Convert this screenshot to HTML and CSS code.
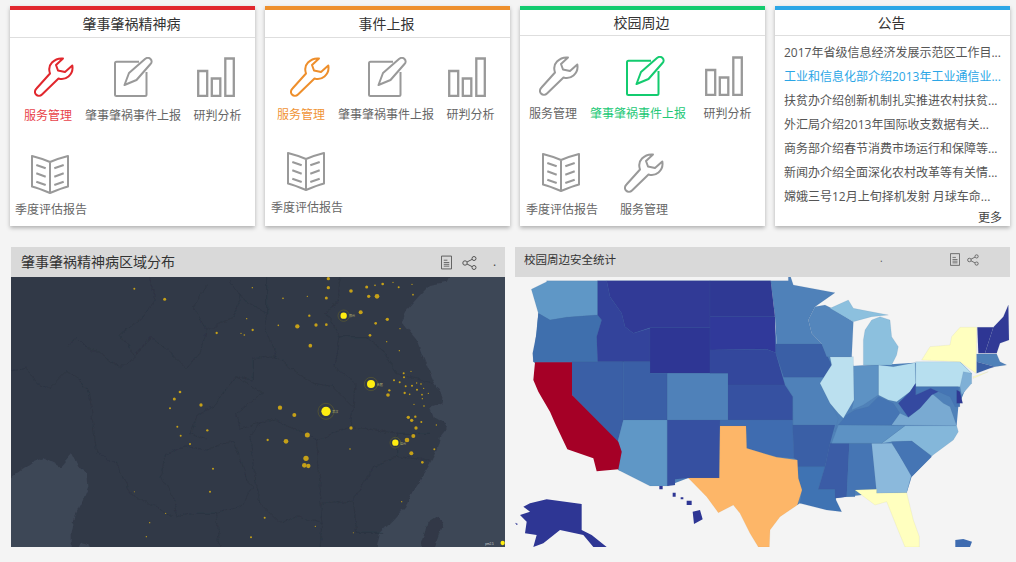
FILE: index.html
```html
<!DOCTYPE html>
<html lang="zh">
<head>
<meta charset="utf-8">
<title>Dashboard</title>
<link rel="stylesheet" href="styles.css">
</head>
<body>
<svg class="defs" width="0" height="0" aria-hidden="true">
  <defs>
    <filter id="rough" x="-5%" y="-5%" width="110%" height="110%">
      <feTurbulence type="fractalNoise" baseFrequency=".035" numOctaves="3" seed="4"/>
      <feDisplacementMap in="SourceGraphic" scale="16" xChannelSelector="R" yChannelSelector="G"/>
    </filter>
    <symbol id="i-wrench" viewBox="0 0 40 40">
      <path d="M16 16.500C14.500 12 15.500 8 18 5.500 21 2.500 25 1 29 1.500L22 8 24 13.500 31 15 38.300 8.500C39 12.500 37.500 17 34.500 19.500 31.500 22 27.500 22.500 24.500 21.500L8 37.500C6 39.500 3.500 39 2 37.500 .5 36 .5 33.500 2.500 31.500Z" fill="none" stroke="currentColor" stroke-width="2" stroke-linejoin="round"/>
    </symbol>
    <symbol id="i-edit" viewBox="0 0 40 40">
      <path d="M25 4.700H2.500A1.500 1.500 0 0 0 1 6.200V37.500A1.500 1.500 0 0 0 2.500 39H31A1.500 1.500 0 0 0 32.500 37.500V15" fill="none" stroke="currentColor" stroke-width="2"/>
      <path d="M10.500 28L15 16 31 2C33 .5 35 .5 36.500 2 38 3.500 38 5.500 36.500 7L22.500 23Z" fill="none" stroke="currentColor" stroke-width="2" stroke-linejoin="round"/>
    </symbol>
    <symbol id="i-bars" viewBox="0 0 40 40">
      <path d="M1.200 14h9v25h-9zM14.800 21.500h8.500V39h-8.500zM28.300 1.500h8.500V39h-8.500z" fill="none" stroke="currentColor" stroke-width="2.300"/>
    </symbol>
    <symbol id="i-book" viewBox="0 0 40 40">
      <path d="M19 7C13 4.500 7 2.500 1 1V31.500C7 33 13 35.500 19 38 25 35.500 31 33 37 31.500V1C31 2.500 25 4.500 19 7zM19 7V38" fill="none" stroke="currentColor" stroke-width="2" stroke-linejoin="round"/>
      <path d="M5.300 10l9.400 3.300M5.300 18.300l9.400 3.400M5.300 26.700l9.400 3.300M32.700 10l-9.400 3.300M32.700 18.300l-9.400 3.400M32.700 26.700l-9.400 3.300" fill="none" stroke="currentColor" stroke-width="2"/>
    </symbol>
    <symbol id="i-doc" viewBox="0 0 12 15">
      <path d="M.5.500h11v14H.5z" fill="none" stroke="currentColor"/>
      <path d="M3 5h4M3 7.500h6M3 9.500h6M3 11.500h6" fill="none" stroke="currentColor" stroke-width=".9"/>
    </symbol>
    <symbol id="i-share" viewBox="0 0 15 14">
      <circle cx="3" cy="7" r="2.200" fill="none" stroke="currentColor"/>
      <circle cx="12" cy="2.500" r="2" fill="none" stroke="currentColor"/>
      <circle cx="12" cy="11.500" r="2" fill="none" stroke="currentColor"/>
      <path d="M5 6l5-2.600M5 8l5 2.600" stroke="currentColor" fill="none"/>
    </symbol>
  </defs>
</svg>

<main class="page">
  <section class="cards">
    <article class="card card-red">
      <h2 class="card-title tall">肇事肇祸精神病</h2>
      <div class="tiles">
        <a class="tile t1 on"><svg class="ico wrench"><use href="#i-wrench"/></svg><span>服务管理</span></a>
        <a class="tile t2"><svg class="ico edit"><use href="#i-edit"/></svg><span>肇事肇祸事件上报</span></a>
        <a class="tile t3"><svg class="ico bars"><use href="#i-bars"/></svg><span>研判分析</span></a>
        <a class="tile t4"><svg class="ico book"><use href="#i-book"/></svg><span>季度评估报告</span></a>
      </div>
    </article>
    <article class="card card-orange">
      <h2 class="card-title tall">事件上报</h2>
      <div class="tiles">
        <a class="tile t1 on"><svg class="ico wrench"><use href="#i-wrench"/></svg><span>服务管理</span></a>
        <a class="tile t2"><svg class="ico edit"><use href="#i-edit"/></svg><span>肇事肇祸事件上报</span></a>
        <a class="tile t3"><svg class="ico bars"><use href="#i-bars"/></svg><span>研判分析</span></a>
        <a class="tile t4"><svg class="ico book"><use href="#i-book"/></svg><span>季度评估报告</span></a>
      </div>
    </article>
    <article class="card card-green">
      <h2 class="card-title">校园周边</h2>
      <div class="tiles">
        <a class="tile t1"><svg class="ico wrench"><use href="#i-wrench"/></svg><span>服务管理</span></a>
        <a class="tile t2 on"><svg class="ico edit"><use href="#i-edit"/></svg><span>肇事肇祸事件上报</span></a>
        <a class="tile t3"><svg class="ico bars"><use href="#i-bars"/></svg><span>研判分析</span></a>
        <a class="tile t4"><svg class="ico book"><use href="#i-book"/></svg><span>季度评估报告</span></a>
        <a class="tile t5"><svg class="ico wrench"><use href="#i-wrench"/></svg><span>服务管理</span></a>
      </div>
    </article>
    <article class="card card-blue notice">
      <h2 class="card-title">公告</h2>
      <ul class="news">
        <li>2017年省级信息经济发展示范区工作目...</li>
        <li class="on">工业和信息化部介绍2013年工业通信业...</li>
        <li>扶贫办介绍创新机制扎实推进农村扶贫...</li>
        <li>外汇局介绍2013年国际收支数据有关...</li>
        <li>商务部介绍春节消费市场运行和保障等...</li>
        <li>新闻办介绍全面深化农村改革等有关情...</li>
        <li>嫦娥三号12月上旬择机发射 月球车命...</li>
      </ul>
      <div class="more">更多</div>
    </article>
  </section>

  <section class="panels">
    <article class="panel panel-left">
      <header class="panel-head">
        <h2>肇事肇祸精神病区域分布</h2>
        <div class="tools"><svg class="doc"><use href="#i-doc"/></svg><svg class="share"><use href="#i-share"/></svg><span class="dot">.</span></div>
      </header>
      <svg class="map" viewBox="33 111 1482 810" preserveAspectRatio="none">
        <rect x="33" y="111" width="1482" height="810" fill="#313947"/>
        <g fill="#3d4656" filter="url(#rough)">
          <path d="M1358 90 1340 125 1290 135 1255 170 1225 205 1205 245 1225 270 1250 300 1265 340 1280 375 1300 420 1328 465 1325 490 1290 505 1300 530 1335 550 1340 565 1320 590 1310 630 1285 680 1240 750 1215 800 1180 840 1140 880 1125 945H1560V90Z"/>
          <path d="M10 735 50 700 100 665 130 655 180 680 215 640 235 680 262 695 265 740 245 790 225 830 215 880 215 945H10Z"/>
          <path d="M220 945 240 908 265 915 275 945Z"/>
        </g>
        <path fill="#313947" filter="url(#rough)" d="M1255 945 1285 850 1315 830 1330 845 1310 900 1300 945Z"/>
        <g fill="none" stroke="#2a313e" stroke-width="1.600" stroke-linejoin="round" filter="url(#rough)">
          <path d="M20 395 80 385 110 430 150 445 200 395 240 420 270 465 280 560 290 640 350 670 390 760 450 790 520 830"/>
          <path d="M205 320 230 290 260 320 310 345 360 385 405 350 360 285 430 230 465 180 445 100"/>
          <path d="M405 350 450 290 520 345 560 385 600 340 620 270 580 200 620 130"/>
          <path d="M620 270 700 230 720 170 690 120M720 170 800 220 800 100"/>
          <path d="M800 220 795 265 830 350 760 355 760 420 710 410 790 460 710 520 720 565 780 545 830 540 905 575 950 600 1050 560 1060 500 1000 440 940 430 880 390 830 350"/>
          <path d="M1020 100 1015 180 980 220 1020 290 1005 380 1065 430 1060 500M1020 290 1100 290 1150 330 1190 400 1300 430"/>
          <path d="M1060 560 1190 580 1290 580M1190 580 1190 650 1120 680 1060 780 1070 880 1150 880M1190 650 1290 660"/>
          <path d="M950 600 960 730 965 850 890 830 840 850 780 790 760 680 750 590 780 545"/>
          <path d="M620 600 570 580 590 530 640 500 710 410M620 630 700 600 720 650 740 720 760 740 720 800 650 820 590 820 530 830 520 770 480 710 500 640 560 620 620 630"/>
          <path d="M965 850 960 930M650 820 660 930M1060 780 965 790"/>
        </g>
        <g fill="#c5a018">
          <circle cx="403" cy="146" r="3"/><circle cx="494" cy="178" r="4.500"/><circle cx="757" cy="143" r="2"/><circle cx="849" cy="175" r="2.500"/><circle cx="922" cy="169" r="2"/><circle cx="985" cy="116" r="5"/><circle cx="985" cy="143" r="5"/><circle cx="979" cy="174" r="4.500"/><circle cx="1053" cy="153" r="5.500"/><circle cx="1100" cy="141" r="4.500"/><circle cx="1125" cy="136" r="2.500"/><circle cx="1148" cy="132" r="4"/><circle cx="1179" cy="127" r="2"/><circle cx="1196" cy="142" r="3"/><circle cx="1236" cy="133" r="2"/><circle cx="1239" cy="164" r="2.500"/><circle cx="1106" cy="169" r="5"/><circle cx="1131" cy="169" r="7"/>
          <circle cx="1082" cy="217" r="6"/><circle cx="1162" cy="238" r="5"/><circle cx="1127" cy="250" r="4"/><circle cx="1200" cy="266" r="2"/><circle cx="1110" cy="286" r="4"/><circle cx="1160" cy="305" r="2"/><circle cx="1198" cy="332" r="2"/><circle cx="928" cy="227" r="3.500"/><circle cx="740" cy="236" r="2"/><circle cx="835" cy="256" r="2.500"/><circle cx="892" cy="259" r="6.500"/><circle cx="948" cy="255" r="5"/><circle cx="979" cy="254" r="4"/><circle cx="650" cy="279" r="3.500"/><circle cx="723" cy="280" r="2"/><circle cx="733" cy="285" r="2.500"/><circle cx="758" cy="270" r="3.500"/><circle cx="931" cy="317" r="5.500"/>
          <circle cx="1211" cy="400" r="3"/><circle cx="1212" cy="412" r="3"/><circle cx="1233" cy="394" r="2"/><circle cx="1182" cy="421" r="3"/><circle cx="1199" cy="427" r="3"/><circle cx="1217" cy="439" r="3"/><circle cx="1236" cy="437" r="3"/><circle cx="1250" cy="429" r="2"/><circle cx="1263" cy="432" r="2.500"/><circle cx="1251" cy="449" r="3"/><circle cx="1271" cy="445" r="2"/><circle cx="1168" cy="451" r="3.500"/><circle cx="1164" cy="465" r="5.500"/><circle cx="1214" cy="459" r="3.500"/><circle cx="1229" cy="463" r="2.500"/><circle cx="1266" cy="464" r="2.500"/><circle cx="1285" cy="460" r="2"/><circle cx="1267" cy="476" r="2"/><circle cx="1242" cy="493" r="2"/><circle cx="1272" cy="498" r="2.500"/>
          <circle cx="540" cy="456" r="4"/><circle cx="523" cy="477" r="4.500"/><circle cx="603" cy="495" r="5"/><circle cx="510" cy="505" r="3"/><circle cx="840" cy="503" r="6.500"/><circle cx="883" cy="525" r="6"/><circle cx="532" cy="560" r="3"/><circle cx="622" cy="571" r="3.500"/><circle cx="542" cy="587" r="3"/><circle cx="570" cy="612" r="3"/><circle cx="803" cy="600" r="3.500"/><circle cx="858" cy="604" r="7"/><circle cx="922" cy="585" r="7.500"/><circle cx="1053" cy="564" r="5"/><circle cx="1050" cy="627" r="2.500"/><circle cx="1225" cy="532" r="5"/><circle cx="1246" cy="530" r="3.500"/><circle cx="1235" cy="541" r="5"/><circle cx="1264" cy="546" r="3"/><circle cx="1248" cy="564" r="5"/><circle cx="1309" cy="555" r="2"/><circle cx="1240" cy="588" r="6"/><circle cx="1221" cy="600" r="7"/><circle cx="1234" cy="640" r="6"/><circle cx="1303" cy="628" r="3"/><circle cx="1267" cy="667" r="4"/>
          <circle cx="918" cy="655" r="8"/><circle cx="913" cy="676" r="7"/><circle cx="925" cy="678" r="6.500"/><circle cx="639" cy="686" r="3"/><circle cx="630" cy="755" r="3"/><circle cx="403" cy="755" r="1.500"/><circle cx="794" cy="833" r="3"/><circle cx="946" cy="859" r="2"/><circle cx="449" cy="848" r="2"/><circle cx="497" cy="820" r="2"/><circle cx="439" cy="890" r="2"/><circle cx="753" cy="892" r="3"/><circle cx="1060" cy="878" r="1.500"/><circle cx="1205" cy="785" r="2"/>
        </g>
        <g fill="none" stroke="#5d5c2f" stroke-width="2">
          <circle cx="1031" cy="227" r="17"/><circle cx="1113" cy="432" r="20"/><circle cx="978" cy="514" r="24"/><circle cx="1186" cy="608" r="16"/>
        </g>
        <g fill="#ffee11">
          <circle cx="1031" cy="227" r="9.500"/><circle cx="1113" cy="432" r="12"/><circle cx="978" cy="514" r="14"/><circle cx="1186" cy="608" r="9.500"/>
          <circle cx="1508" cy="909" r="6.500"/>
        </g>
        <g class="maplabels" fill="#b9b36f">
          <text x="1047" y="232">郑州</text><text x="1130" y="438">合肥</text><text x="997" y="520">武汉</text><text x="1200" y="614">温州</text>
        </g>
        <text class="pm" x="1456" y="914" fill="#cfd3d8">pm2.5</text>
      </svg>
    </article>

    <article class="panel panel-right">
      <header class="panel-head small">
        <h2>校园周边安全统计</h2>
        <span class="tick">.</span>
        <div class="tools"><svg class="doc"><use href="#i-doc"/></svg><svg class="share"><use href="#i-share"/></svg></div>
      </header>
      <svg class="map" viewBox="15 111 1485 810" preserveAspectRatio="none">
        <path fill="#4f81b9" d="M263 122H782L800 312 935 312 1025 350 1030 378 1105 375 1215 368 1350 365 1385 400 1345 500 1340 555 1265 648 1205 710 1190 758 1100 760 1010 770 975 775 870 790 862 795 650 780 535 714 472 738 325 690 186 465 70 365 85 220Z"/>
        <g stroke="#44648f" stroke-width="1" stroke-opacity=".3">
          <path fill="#5f97c6" d="M64 148 110 125V122H263V225L220 228 170 232 120 240 85 220 75 185Z"/>
          <path fill="#3f6fad" d="M85 220 120 240 170 232 220 228 263 225 275 240 260 290 263 365H70L68 340 80 280Z"/>
          <path fill="#33439b" d="M263 122H290L300 170 335 220 345 260 370 280 420 265V365H263L260 290 275 240 263 225Z"/>
          <path fill="#313a96" d="M290 122H600V263H420L370 280 345 260 335 220 300 170Z"/>
          <path fill="#2e3694" d="M420 263H600V400H420Z"/>
          <path fill="#3a5fa6" d="M186 365H340V540L323 605 186 465Z"/>
          <path fill="#3a5fa6" d="M340 365H420V400H472V540H340Z"/>
          <path fill="#4f81b9" d="M472 400H654V540H472Z"/>
          <path fill="#5f97c6" d="M340 540H472V738H420L325 690 335 635 323 605Z"/>
          <path fill="#3650a1" d="M472 540H630L628 714H535L495 718V735L472 738Z"/>
          <path fill="#4f81b9" d="M782 122H835V111H842L850 135 975 158 915 200 895 240 905 280 935 312H800L795 230Z"/>
          <path fill="#3a5fa6" d="M797 312H935L965 375 940 415H822L797 338Z"/>
          <path fill="#4f81b9" d="M815 412H940L935 440 985 535 975 575 960 555H850L848 470Z"/>
          <path fill="#2f3994" d="M600 122H782L795 230H600Z"/>
          <path fill="#30399a" d="M600 230H795L797 338 770 328 600 330Z"/>
          <path fill="#33479c" d="M600 330 770 328 797 338 825 435H654V400H600Z"/>
          <path fill="#3651a1" d="M654 435H825L848 470V540H654Z"/>
          <path fill="#3f6cb0" d="M630 540H848L852 655 800 650 710 625 708 558H630Z"/>
          <path fill="#3a5fa6" d="M848 555H975L960 610 945 680H862V660L852 655Z"/>
          <path fill="#3f73b3" d="M862 680H945L925 748H975L978 780 995 815 950 810 870 790 876 750 865 715Z"/>
          <path fill="#3b5ca6" d="M960 610H1018L1010 770 975 775V748H925L945 680Z"/>
          <path fill="#4575b4" d="M1018 610H1085L1100 748 1035 750V770H1010Z"/>
          <path fill="#8bb9dc" d="M1085 610H1145L1205 703 1190 758 1100 760Z"/>
          <path fill="#84b7da" d="M1185 557H1340L1345 575 1330 600 1265 648 1205 603 1145 605 1115 610Z"/>
          <path fill="#4575b4" d="M1145 605 1205 603 1265 650 1205 710Z"/>
          <path fill="#5d92c4" d="M985 555 1185 557 1115 610H965Z"/>
          <path fill="#4575b4" d="M985 555 1010 525 1035 510 1075 500 1105 470 1150 490 1170 520 1145 555Z"/>
          <path fill="#b5deef" d="M1105 375 1150 380 1215 368 1217 430 1200 455 1160 485 1135 480 1105 465Z"/>
          <path fill="#5d92c4" d="M1030 378 1105 375V465L1060 495 1025 510 1032 480Z"/>
          <path fill="#bbe0ef" d="M960 350H1030L1032 480 1000 535 985 520 960 490 930 430 965 375Z"/>
          <path fill="#5486bc" d="M915 200 945 195 965 205 1030 245 1025 350H950L935 312 905 280 895 240Z"/>
          <path fill="#8cc0de" d="M1060 375V300L1065 270 1085 240 1110 230 1140 240 1145 290 1165 320 1160 345 1145 375Z"/>
          <path fill="#8cc0de" d="M960 205 1015 180 1030 205 1135 225 1085 230 1030 245Z"/>
          <path fill="#b7dfef" d="M1217 365H1350L1385 400 1360 440H1217Z"/>
          <path fill="#4575b4" d="M1217 440H1345L1350 500H1335L1320 470 1285 455 1262 445 1217 465Z"/>
          <path fill="#79aad2" d="M1145 555 1170 520 1195 532 1230 505 1265 460 1300 490 1320 500 1340 557Z"/>
          <path fill="#3449a0" d="M1217 430V465L1262 445 1285 455 1265 465 1230 505 1195 532 1165 490 1200 455Z"/>
          <path fill="#7fb0d6" d="M1360 395 1385 400V430L1355 465 1350 440Z"/>
          <path fill="#2f3994" d="M1340 450 1350 455 1358 490H1340Z"/>
          <path fill="#ffffbf" stroke="#a8a56a" d="M1235 360 1260 320 1320 315 1325 290 1350 262H1400L1398 400 1350 365Z"/>
          <path fill="#ffffbf" stroke="#a8a56a" d="M1390 410 1435 395 1390 415Z"/>
          <path fill="#2e3694" d="M1402 262H1450L1425 340H1405Z"/>
          <path fill="#313a96" d="M1450 262 1480 230 1495 195 1497 300 1470 310 1460 340H1425Z"/>
          <path fill="#4f81b9" d="M1400 342H1460L1470 365 1490 375 1455 380 1400 365Z"/>
          <path fill="#3a5fa6" d="M1400 365 1455 380 1440 385 1400 400Z"/>
          <path fill="#ffffbf" stroke="#a8a56a" d="M1035 750 1100 748V760L1190 758 1210 840 1228 890V921H1185L1160 860 1130 785 1095 795Z"/>
          <path fill="#fdb668" stroke="#b98544" d="M630 558H708L710 625 800 652 862 660 865 715 876 750 862 795 810 830 780 870 778 921H745L720 880 690 820 670 795 625 818 590 770 535 714H628Z"/>
          <path fill="#a50026" stroke="none" d="M75 367H186V465L325 605 335 635 325 688 260 694 250 655 172 628 135 550 120 515 85 455 70 420Z"/>
          <path fill="#2e3694" stroke="none" d="M40 800 60 790 110 778 215 792V870L245 885 290 921H250L220 885 150 870 100 910 70 921 80 885 45 880 50 845 30 825 60 815Z"/>
          <path fill="#2e3694" stroke="none" d="M548 815 570 810 578 838 552 852ZM448 738H458V748H448ZM488 758H497V770H488ZM512 772H520V778H512ZM530 782H545V795H530ZM15 848 24 852 20 855Z"/>
          <path fill="#3f6cb0" stroke="none" d="M1336 900 1360 897 1386 905 1380 921H1336Z"/>
        </g>
      </svg>
    </article>
  </section>
</main>
</body>
</html>
```
FILE: styles.css
```css
* { box-sizing: border-box; }
html, body { margin: 0; padding: 0; }
body {
  background: #f4f4f4;
  font-family: "Open Sans", "Noto Sans CJK SC", sans-serif;
  color: #555;
  width: 1016px;
  height: 562px;
  overflow: hidden;
}
.defs { display: block; height: 0; }
.page { padding: 6px 6px 0 10px; }
.cards { display: flex; gap: 10px; }
.card {
  width: 245px;
  height: 220px;
  background: #fff;
  border-top: 4px solid;
  box-shadow: 0 2px 4px rgba(0, 0, 0, .28);
}
.card.notice { width: 235px; }
.card-red { border-color: #e1272d; }
.card-orange { border-color: #ee8f2c; }
.card-green { border-color: #13cb6f; }
.card-blue { border-color: #2ba6e6; }
.card-title {
  margin: 0;
  height: 26px;
  line-height: 25px;
  padding-right: 2px;
  font-size: 14px;
  font-weight: 400;
  color: #333;
  text-align: center;
  border-bottom: 1px solid #dedede;
  font-family: "Noto Sans CJK SC", sans-serif;
}
.card-title.tall { height: 28px; line-height: 26px; }

.tiles {
  display: grid;
  justify-content: start;
  grid-template-columns: 76px 94px 75px;
}
.card-red .tiles { grid-auto-rows: 94px; }
.card-orange .tiles { grid-template-columns: 72px 98px 71px; grid-auto-rows: 93px; }
.card-green .tiles { grid-template-columns: 66px 104px 75px; grid-auto-rows: 96px; }

.tile {
  display: flex;
  flex-direction: column;
  align-items: center;
  color: #666;
  font-size: 12px;
  line-height: 16px;
  font-family: "Noto Sans CJK SC", sans-serif;
  white-space: nowrap;
}
.card-red .on { color: #e8434a; }
.card-orange .on { color: #f09436; }
.card-green .on { color: #22c876; }
.ico { color: #999; display: block; flex: none; width: 40px; height: 40px; margin-top: 19px; margin-bottom: 10px; }
.card-red .tile.on .ico { color: #e1272d; }
.card-orange .tile.on .ico { color: #ee8f2c; }
.card-green .tile.on .ico { color: #13cb6f; }
.card-orange .ico { margin-bottom: 9px; }
.card-green .ico { margin-top: 20px; margin-bottom: 9px; }

.t4 { margin-left: 6px; }
.card-orange .t4 { margin-left: 12px; }
.card-green .t4 { margin-left: 18px; }
.card-green .t5 { margin-left: 12px; }

.tile.t4 .ico { margin-top: 23px; margin-bottom: 6px; }
.card-orange .tile.t4 .ico { margin-top: 21px; margin-bottom: 7px; }
.card-green .tile.t4 .ico,
.card-green .tile.t5 .ico { margin-top: 21px; margin-bottom: 8px; }

.card-red .t1 .ico { margin-left: 12px; }
.card-red .t2 .ico { margin-left: 2px; }
.card-red .t3 .ico { margin-right: 2px; }
.card-orange .t1 .ico { margin-left: 18px; }
.card-orange .t2 .ico { margin-left: 4px; }
.card-orange .t3 .ico { margin-right: 5px; }
.card-green .t1 .ico { margin-left: 11px; }
.card-green .t2 .ico { margin-left: 16px; }
.card-green .t3 .ico { margin-right: 5px; }

.news {
  list-style: none;
  margin: 0;
  padding: 5px 0 0 9px;
  font-size: 12px;
  line-height: 24px;
  color: #555;
  white-space: nowrap;
}
.news li { height: 24px; overflow: hidden; }
.news .on { color: #2ba6e6; }
.more {
  text-align: right;
  padding-right: 8px;
  font-size: 12px;
  line-height: 14px;
  margin-top: 1px;
  color: #444;
  font-family: "Noto Sans CJK SC", sans-serif;
}

.panels { display: flex; gap: 10px; margin-top: 21px; padding-left: 1px; }
.panel { height: 300px; display: flex; flex-direction: column; }
.panel-left { width: 494px; }
.panel-right { width: 495px; }
.panel-head {
  height: 30px;
  flex: none;
  background: #d9d9d9;
  display: flex;
  align-items: center;
  position: relative;
  padding-left: 10px;
}
.panel-head h2 {
  margin: 0 0 2px;
  font-size: 14px;
  font-weight: 400;
  color: #333;
  font-family: "Noto Sans CJK SC", sans-serif;
}
.panel-head.small { padding-left: 9px; }
.panel-head.small h2 { font-size: 11.5px; margin: 0 0 6px; }
.tools {
  position: absolute;
  display: flex;
  align-items: center;
  color: #555;
  right: 3px;
  top: 8px;
  gap: 10px;
}
.panel-left .doc { width: 11px; height: 15px; }
.panel-left .share { width: 15px; height: 14px; }
.dot { font-size: 12px; line-height: 14px; width: 15px; text-align: center; color: #444; margin-top: -2px; }
.panel-right .tools { right: 31px; top: 6px; gap: 7px; }
.panel-right .doc { width: 10px; height: 13px; }
.panel-right .share { width: 12px; height: 12px; }
.tick { position: absolute; left: 365px; top: 4px; font-size: 10px; color: #555; }
.map { display: block; width: 100%; height: 270px; flex: none; }
.maplabels { font-size: 9px; font-family: "Noto Sans CJK SC", sans-serif; }
.pm { font-size: 9px; font-family: "Liberation Sans", sans-serif; }
```
